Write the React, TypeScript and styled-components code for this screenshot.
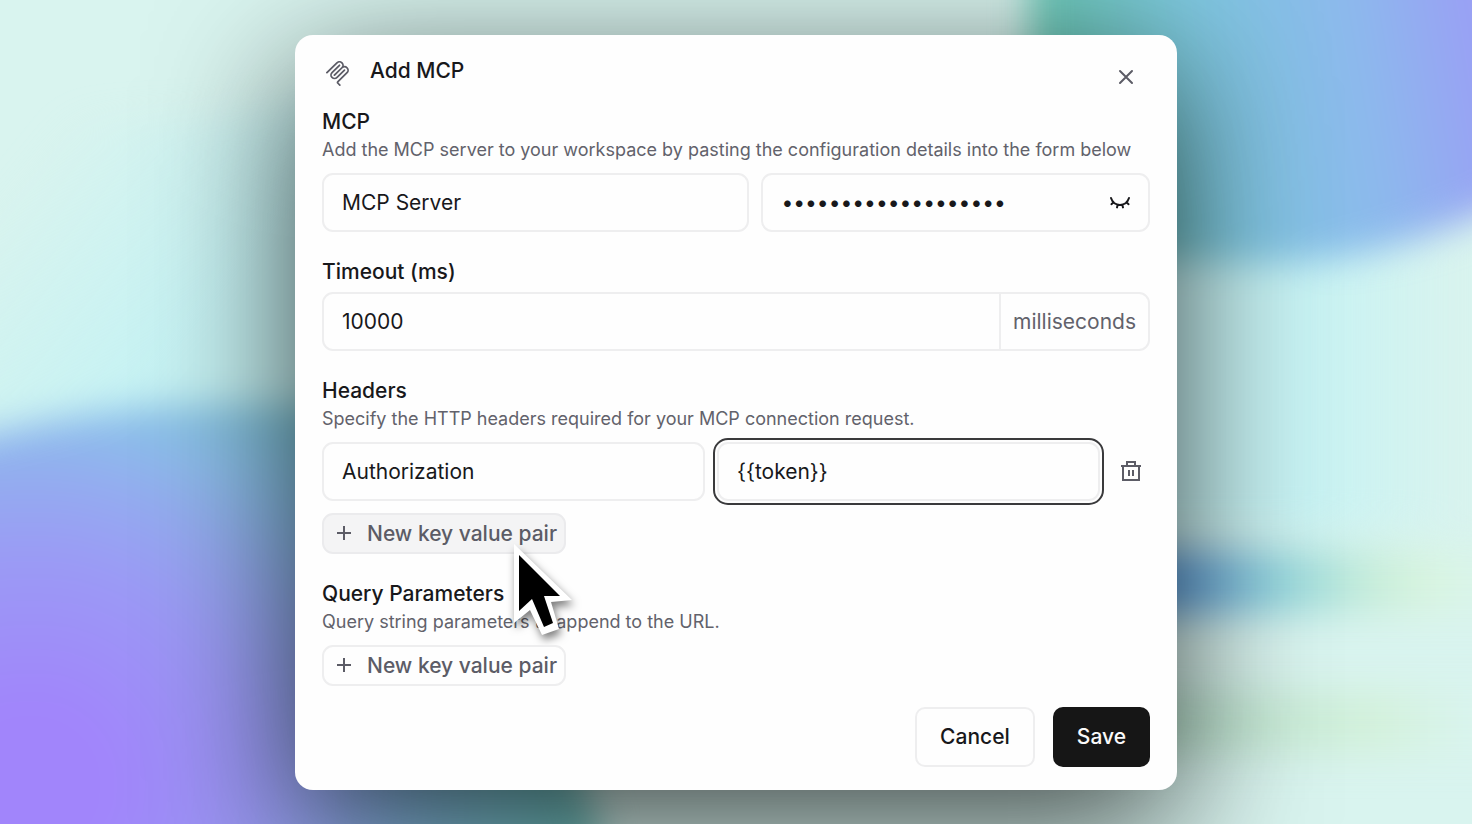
import React, { useState } from 'react';
import styled, { createGlobalStyle, css } from 'styled-components';

const GlobalStyle = createGlobalStyle`
  *, *::before, *::after { box-sizing: border-box; }
  body {
    margin: 0;
    font-family: Inter, "Liberation Sans", sans-serif;
    color: #18181b;
  }
`;

const Stage = styled.div`
  display: grid;
  min-height: 100vh;
  grid-template-columns: minmax(0, 1fr);
  overflow: hidden;
`;

const Wallpaper = styled.svg`
  grid-area: 1 / 1;
  width: 100%;
  height: 100%;
`;

const Dialog = styled.form`
  grid-area: 1 / 1;
  place-self: center;
  width: 60%;
  min-width: 680px;
  max-width: 882px;
  padding: 22px 27px 23px;
  border-radius: 18px;
  background: #fefefe;
  box-shadow: 0 40px 140px rgba(0, 0, 0, 0.7);
`;

const Header = styled.header`
  display: flex;
  align-items: flex-start;
  height: 51px;
  padding: 0 4px 0 3px;
`;

const Title = styled.h1`
  flex: 1;
  margin: 0 0 0 20px;
  font-size: 21px;
  line-height: 28px;
  font-weight: 500;
`;

const IconButton = styled.button`
  display: flex;
  align-items: center;
  justify-content: center;
  flex: none;
  padding: 0;
  border: 0;
  background: none;
  color: #5c5c66;
  cursor: pointer;
`;

const CloseButton = styled(IconButton)`
  width: 40px;
  height: 40px;
`;

const BrandIcon = styled.svg`
  flex: none;
  margin-top: 4px;
  fill: #5c5c66;
`;

const Section = styled.section`
  margin-bottom: 26px;
`;

const sectionTitle = css`
  display: block;
  margin: 0;
  font-size: 21px;
  line-height: 28px;
  font-weight: 500;
`;

const Label = styled.label`
  ${sectionTitle}
`;

const Heading = styled.h2`
  ${sectionTitle}
`;

const Hint = styled.p`
  margin: 0 0 9px;
  font-size: 18px;
  line-height: 28px;
  color: #62626b;
`;

const Row = styled.div<{ $columns: string }>`
  display: grid;
  grid-template-columns: ${(p) => p.$columns};
  gap: 12px;
`;

const fieldBox = css`
  height: 59px;
  border: 2px solid #eeeeef;
  border-radius: 11px;
  background: #fefefe;
`;

const bareText = css`
  min-width: 0;
  font-family: inherit;
  font-size: 21px;
  color: #18181b;
`;

const TextInput = styled.input<{ $focused?: boolean }>`
  ${fieldBox}
  ${bareText}
  width: 100%;
  padding: 0 18px;
  outline: ${(p) => (p.$focused ? '2px solid #3a3a3c' : 'none')};
  outline-offset: 2px;
`;

const FieldGroup = styled.div`
  ${fieldBox}
  display: flex;
  align-items: stretch;
  overflow: hidden;
`;

const GroupInput = styled.input`
  ${bareText}
  flex: 1;
  padding: 0 18px;
  border: 0;
  outline: 0;
  background: none;
`;

const RevealButton = styled(IconButton)`
  width: 57px;
  color: #18181b;
`;

const Unit = styled.span`
  display: flex;
  align-items: center;
  padding: 0 12px;
  border-left: 2px solid #eeeeef;
  font-size: 21px;
  color: #62626b;
`;

const TimeoutGroup = styled(FieldGroup)`
  margin-top: 6px;
`;

const AddSlot = styled.div<{ $spaced?: boolean }>`
  position: relative;
  width: fit-content;
  margin-top: ${(p) => (p.$spaced ? 12 : 0)}px;
`;

const AddButton = styled.button<{ $hovered?: boolean }>`
  display: flex;
  align-items: center;
  gap: 16px;
  height: 41px;
  padding: 0 7px 0 13px;
  border: 2px solid ${(p) => (p.$hovered ? '#ebebed' : '#eeeeef')};
  border-radius: 11px;
  background: ${(p) => (p.$hovered ? '#f4f4f5' : '#fefefe')};
  font-family: inherit;
  font-size: 21px;
  font-weight: 500;
  color: #5c5c66;
`;

const Pointer = styled.svg`
  position: absolute;
  left: 186px;
  top: 26px;
  width: 70px;
  height: 106px;
  overflow: visible;
  pointer-events: none;
  filter: drop-shadow(2px 5px 4px rgba(0, 0, 0, 0.5));
`;

const Footer = styled.footer`
  display: flex;
  justify-content: flex-end;
  gap: 18px;
  margin-top: -5px;
`;

const ActionButton = styled.button<{ $primary?: boolean }>`
  height: 60px;
  padding: 0 ${(p) => (p.$primary ? 24 : 23)}px;
  border: ${(p) => (p.$primary ? '0' : '2px solid #eeeeef')};
  border-radius: 10px;
  background: ${(p) => (p.$primary ? '#161616' : '#fefefe')};
  color: ${(p) => (p.$primary ? '#fafafa' : '#18181b')};
  font-family: inherit;
  font-size: 21px;
  font-weight: 500;
`;

const McpIcon = () => (
  <BrandIcon width="25" height="25" viewBox="0 0 24 24" aria-hidden="true">
    <path d="M15.688 2.343a2.588 2.588 0 00-3.61 0l-9.626 9.44a.863.863 0 01-1.203 0 .823.823 0 010-1.18l9.626-9.44a4.313 4.313 0 016.016 0 4.116 4.116 0 011.204 3.54 4.3 4.3 0 013.609 1.18l.05.05a4.115 4.115 0 010 5.9l-8.706 8.537a.274.274 0 000 .393l1.788 1.754a.823.823 0 010 1.18.863.863 0 01-1.203 0l-1.788-1.753a1.92 1.92 0 010-2.754l8.706-8.538a2.47 2.47 0 000-3.54l-.05-.049a2.588 2.588 0 00-3.607-.003l-7.172 7.034-.002.002-.098.097a.863.863 0 01-1.204 0 .823.823 0 010-1.18l7.273-7.133a2.47 2.47 0 00-.003-3.537z" />
    <path d="M14.485 4.703a.823.823 0 000-1.18.863.863 0 00-1.204 0l-7.119 6.982a4.115 4.115 0 000 5.9 4.314 4.314 0 006.016 0l7.12-6.982a.823.823 0 000-1.18.863.863 0 00-1.204 0l-7.119 6.982a2.588 2.588 0 01-3.61 0 2.47 2.47 0 010-3.54l7.12-6.982z" />
  </BrandIcon>
);

const CloseIcon = () => (
  <svg width="16" height="16" viewBox="0 0 16 16" stroke="currentColor" strokeWidth="2" strokeLinecap="round" aria-hidden="true">
    <path d="M2 2l12 12M14 2L2 14" />
  </svg>
);

const EyeClosedIcon = () => (
  <svg width="24" height="24" viewBox="0 0 24 24" fill="none" stroke="currentColor" strokeWidth="2" strokeLinecap="round" aria-hidden="true">
    <path d="M3 8C6 17.200 18 17.200 21 8M5.600 12.200L3.400 14.200M18.400 12.200L20.600 14.200M9.700 14.700L9 17.400M14.300 14.700L15 17.400" />
  </svg>
);

const TrashIcon = () => (
  <svg width="20" height="20" viewBox="0 0 20 20" fill="none" stroke="currentColor" strokeWidth="2" aria-hidden="true">
    <path d="M0 5h20M2 5v14h16V5M6 5V1h8v4M8 9v6M12 9v6" />
  </svg>
);

const PlusIcon = () => (
  <svg width="14" height="14" viewBox="0 0 14 14" stroke="currentColor" strokeWidth="2" aria-hidden="true">
    <path d="M7 0v14M0 7h14" />
  </svg>
);

const Backdrop = () => (
  <Wallpaper viewBox="0 0 1472 824" preserveAspectRatio="none" aria-hidden="true">
    <defs>
      <filter id="soft" x="-20%" y="-20%" width="140%" height="140%" colorInterpolationFilters="sRGB">
        <feGaussianBlur stdDeviation="18" />
      </filter>
      <radialGradient id="violet" gradientUnits="userSpaceOnUse" cx="30" cy="785" r="660">
        <stop offset="0.12" stopColor="#a185fb" />
        <stop offset="0.34" stopColor="#9b9af5" />
        <stop offset="0.46" stopColor="#94abf0" />
        <stop offset="0.56" stopColor="#8cbeea" />
        <stop offset="0.7" stopColor="#80c8d8" />
        <stop offset="0.9" stopColor="#6cc4b8" />
      </radialGradient>
      <linearGradient id="azure" gradientUnits="userSpaceOnUse" x1="1060" y1="140" x2="1490" y2="70">
        <stop offset="0" stopColor="#6ccbb8" />
        <stop offset="0.35" stopColor="#7fc8e0" />
        <stop offset="0.72" stopColor="#8db8ed" />
        <stop offset="1" stopColor="#9a9ff5" />
      </linearGradient>
      <linearGradient id="cyan" gradientUnits="userSpaceOnUse" x1="40" y1="150" x2="260" y2="330">
        <stop offset="0" stopColor="#c6f2f3" stopOpacity="0" />
        <stop offset="0.8" stopColor="#c6f2f3" />
      </linearGradient>
      <linearGradient id="cyanRight" gradientUnits="userSpaceOnUse" x1="1300" y1="0" x2="1460" y2="0">
        <stop offset="0" stopColor="#c6f2f3" />
        <stop offset="1" stopColor="#c6f2f3" stopOpacity="0" />
      </linearGradient>
      <linearGradient id="stripe" gradientUnits="userSpaceOnUse" x1="1177" y1="0" x2="1472" y2="0">
        <stop offset="0" stopColor="#68a8e4" />
        <stop offset="0.35" stopColor="#96d8de" />
        <stop offset="0.65" stopColor="#c6ecda" />
        <stop offset="0.85" stopColor="#d8f4df" />
        <stop offset="1" stopColor="#d9f4ea" />
      </linearGradient>
      <linearGradient id="mint" gradientUnits="userSpaceOnUse" x1="1177" y1="0" x2="1472" y2="0">
        <stop offset="0" stopColor="#bfe6d4" />
        <stop offset="0.7" stopColor="#d4f1dc" />
        <stop offset="1" stopColor="#d9f4ee" />
      </linearGradient>
    </defs>
    <rect width="1472" height="824" fill="#d9f4ef" />
    <g filter="url(#soft)">
      <path d="M-80 120H200L400 80V500H-80Z" fill="url(#cyan)" />
      <path d="M1130 200H1560V530H1130Z" fill="url(#cyanRight)" />
      <path d="M-90 454Q60 412 170 406T420 412L600 824V920H-90Z" fill="url(#violet)" />
      <path d="M1030 -90H1570V170Q1430 249 1320 260T1030 240Z" fill="url(#azure)" />
      <path d="M1100 550H1560V614H1100Z" fill="url(#stripe)" />
      <path d="M1100 690H1560V755H1100Z" fill="url(#mint)" />
    </g>
  </Wallpaper>
);

export default function App() {
  const [name, setName] = useState('MCP Server');
  const [secret, setSecret] = useState('https://mcp.host/v1');
  const [timeout, setTimeoutMs] = useState('10000');
  const [headerKey, setHeaderKey] = useState('Authorization');
  const [headerValue, setHeaderValue] = useState('{{token}}');
  const [revealed, setRevealed] = useState(false);

  return (
    <>
      <GlobalStyle />
      <Stage>
        <Backdrop />
        <Dialog onSubmit={(e) => e.preventDefault()}>
          <Header>
            <McpIcon />
            <Title>Add MCP</Title>
            <CloseButton type="button" aria-label="Close">
              <CloseIcon />
            </CloseButton>
          </Header>

          <Section>
            <Label htmlFor="name">MCP</Label>
            <Hint>Add the MCP server to your workspace by pasting the configuration details into the form below</Hint>
            <Row $columns="11fr 10fr">
              <TextInput id="name" value={name} onChange={(e) => setName(e.target.value)} />
              <FieldGroup>
                <GroupInput
                  type={revealed ? 'text' : 'password'}
                  aria-label="Server URL"
                  value={secret}
                  onChange={(e) => setSecret(e.target.value)}
                />
                <RevealButton type="button" aria-label="Show URL" onClick={() => setRevealed(!revealed)}>
                  <EyeClosedIcon />
                </RevealButton>
              </FieldGroup>
            </Row>
          </Section>

          <Section>
            <Label htmlFor="timeout">Timeout (ms)</Label>
            <TimeoutGroup>
              <GroupInput id="timeout" value={timeout} onChange={(e) => setTimeoutMs(e.target.value)} />
              <Unit>milliseconds</Unit>
            </TimeoutGroup>
          </Section>

          <Section>
            <Heading>Headers</Heading>
            <Hint>Specify the HTTP headers required for your MCP connection request.</Hint>
            <Row $columns="1fr 1fr 38px">
              <TextInput aria-label="Header name" value={headerKey} onChange={(e) => setHeaderKey(e.target.value)} />
              <TextInput
                $focused
                aria-label="Header value"
                value={headerValue}
                onChange={(e) => setHeaderValue(e.target.value)}
              />
              <IconButton type="button" aria-label="Delete header">
                <TrashIcon />
              </IconButton>
            </Row>
            <AddSlot $spaced>
              <AddButton type="button" $hovered>
                <PlusIcon />
                New key value pair
              </AddButton>
              <Pointer viewBox="0 0 70 106" aria-hidden="true">
                <path d="M6 5L64 61L43 63L51 90L34 96L22 71L6 84Z" fill="#fff" />
                <path d="M11 16L52 57H36L45 84L36 88L24 60L11 72Z" fill="#000" />
              </Pointer>
            </AddSlot>
          </Section>

          <Section>
            <Heading>Query Parameters</Heading>
            <Hint>Query string parameters to append to the URL.</Hint>
            <AddSlot>
              <AddButton type="button">
                <PlusIcon />
                New key value pair
              </AddButton>
            </AddSlot>
          </Section>

          <Footer>
            <ActionButton type="button">Cancel</ActionButton>
            <ActionButton type="submit" $primary>
              Save
            </ActionButton>
          </Footer>
        </Dialog>
      </Stage>
    </>
  );
}
